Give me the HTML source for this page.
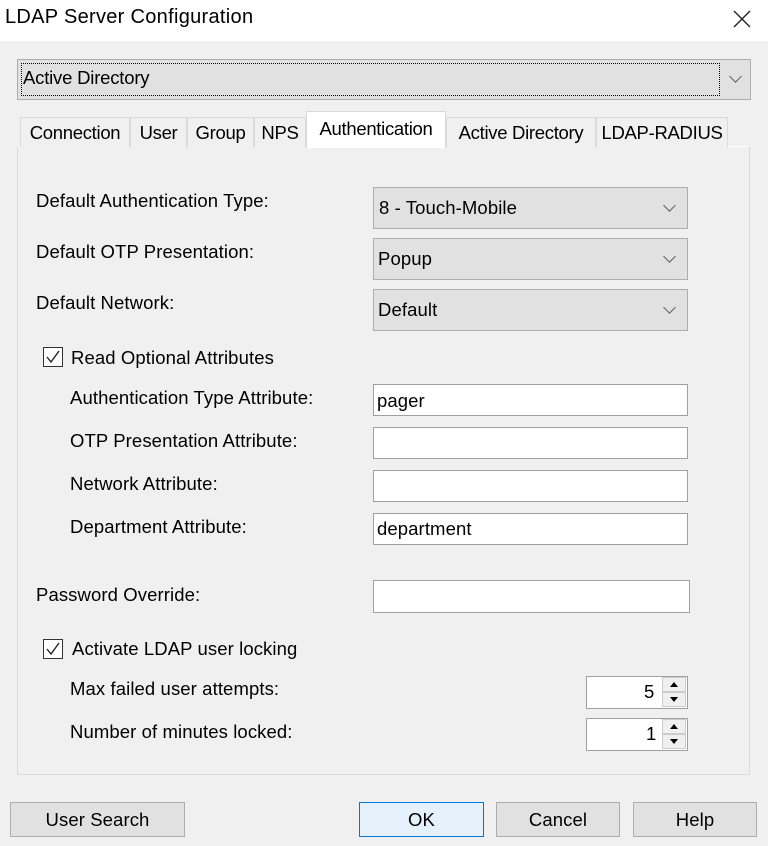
<!DOCTYPE html>
<html><head><style>
*{box-sizing:border-box;margin:0;padding:0}
body{width:768px;height:846px;background:#f0f0f0;font-family:"Liberation Sans",sans-serif;font-size:18.5px;color:#000;position:relative;overflow:hidden;letter-spacing:0.1px}
.a{position:absolute;white-space:nowrap}
.title{left:0;top:0;width:768px;height:41px;background:#fff}
.dd{background:#e1e1e1;border:1px solid #adadad}
.tb{background:#fff;border:1px solid #a0a0a0}
.chev{position:absolute;width:9px;height:9px;border-right:1.3px solid #606060;border-bottom:1.3px solid #606060;transform:rotate(45deg)}
.tab{position:absolute;top:117px;height:30px;border:1px solid #dadada;border-bottom:none;background:#f0f0f0;text-align:center;line-height:29px;letter-spacing:-0.3px}
.cb{position:absolute;width:20px;height:20px;border:1px solid #333;background:#fff}
.btn{position:absolute;top:802px;height:35px;background:#e1e1e1;border:1px solid #adadad;text-align:center;line-height:33px}
.spin{position:absolute;width:102px;height:33px;background:#fff;border:1px solid #a0a0a0}
</style></head><body>
<div class="a title"></div>
<div class="a" style="left:5px;top:6px;font-size:20px;letter-spacing:0.3px">LDAP Server Configuration</div>
<svg class="a" style="left:733px;top:10px" width="18" height="18"><path d="M1 1L17 17M17 1L1 17" stroke="#222" stroke-width="1.4"/></svg>

<div class="a dd" style="left:17px;top:59px;width:734px;height:41px"></div>
<div class="a" style="left:21px;top:63px;width:699px;height:33px;border:1px dotted #000"></div>
<div class="a" style="left:23px;top:67px;letter-spacing:-0.2px">Active Directory</div>
<div class="chev" style="left:731px;top:72px"></div>

<div class="a" style="left:17px;top:146px;width:733px;height:629px;border:1px solid #dadada;border-top-color:#fff;background:#f0f0f0"></div>
<div class="tab" style="left:20px;width:110px">Connection</div>
<div class="tab" style="left:130px;width:57px">User</div>
<div class="tab" style="left:187px;width:67px">Group</div>
<div class="tab" style="left:254px;width:52px">NPS</div>
<div class="tab" style="left:306px;top:111px;height:37px;width:140px;background:#fff;line-height:34px;border-color:#dadada">Authentication</div>
<div class="tab" style="left:446px;width:150px">Active Directory</div>
<div class="tab" style="left:596px;width:132px">LDAP-RADIUS</div>

<div class="a" style="left:36px;top:190px">Default Authentication Type:</div>
<div class="a" style="left:36px;top:241px">Default OTP Presentation:</div>
<div class="a" style="left:36px;top:292px">Default Network:</div>
<div class="a dd" style="left:373px;top:187px;width:315px;height:42px"></div>
<div class="a" style="left:379px;top:197px">8 - Touch-Mobile</div>
<div class="chev" style="left:665px;top:201px"></div>
<div class="a dd" style="left:373px;top:238px;width:315px;height:42px"></div>
<div class="a" style="left:378px;top:248px">Popup</div>
<div class="chev" style="left:665px;top:252px"></div>
<div class="a dd" style="left:373px;top:289px;width:315px;height:42px"></div>
<div class="a" style="left:378px;top:299px">Default</div>
<div class="chev" style="left:665px;top:303px"></div>

<div class="cb" style="left:43px;top:347px"></div>
<svg class="a" style="left:45px;top:349px" width="16" height="16"><path d="M2 8L6 13L14 2" stroke="#222" stroke-width="1.4" fill="none"/></svg>
<div class="a" style="left:71px;top:347px">Read Optional Attributes</div>

<div class="a" style="left:70px;top:387px">Authentication Type Attribute:</div>
<div class="a" style="left:70px;top:430px">OTP Presentation Attribute:</div>
<div class="a" style="left:70px;top:473px">Network Attribute:</div>
<div class="a" style="left:70px;top:516px">Department Attribute:</div>
<div class="a tb" style="left:373px;top:384px;width:315px;height:32px"></div>
<div class="a" style="left:377px;top:390px">pager</div>
<div class="a tb" style="left:373px;top:427px;width:315px;height:32px"></div>
<div class="a tb" style="left:373px;top:470px;width:315px;height:32px"></div>
<div class="a tb" style="left:373px;top:513px;width:315px;height:32px"></div>
<div class="a" style="left:377px;top:518px">department</div>

<div class="a" style="left:36px;top:584px">Password Override:</div>
<div class="a tb" style="left:373px;top:580px;width:317px;height:33px"></div>

<div class="cb" style="left:43px;top:639px"></div>
<svg class="a" style="left:45px;top:641px" width="16" height="16"><path d="M2 8L6 13L14 2" stroke="#222" stroke-width="1.4" fill="none"/></svg>
<div class="a" style="left:72px;top:638px">Activate LDAP user locking</div>

<div class="a" style="left:70px;top:678px">Max failed user attempts:</div>
<div class="a" style="left:70px;top:721px">Number of minutes locked:</div>
<div class="spin" style="left:586px;top:676px"></div>
<div class="a" style="left:644px;top:681px">5</div>
<div class="spin" style="left:586px;top:718px"></div>
<div class="a" style="left:646px;top:723px">1</div>
<svg class="a" style="left:662px;top:677px" width="25" height="31"><rect x="0.5" y="0.5" width="23" height="14" fill="#f0f0f0" stroke="#ccc"/><rect x="0.5" y="15.5" width="23" height="14" fill="#f0f0f0" stroke="#ccc"/><path d="M8 10L12 5L16 10Z M8 20L12 25L16 20Z" fill="#000"/></svg>
<svg class="a" style="left:662px;top:719px" width="25" height="31"><rect x="0.5" y="0.5" width="23" height="14" fill="#f0f0f0" stroke="#ccc"/><rect x="0.5" y="15.5" width="23" height="14" fill="#f0f0f0" stroke="#ccc"/><path d="M8 10L12 5L16 10Z M8 20L12 25L16 20Z" fill="#000"/></svg>

<div class="btn" style="left:10px;width:175px">User Search</div>
<div class="btn" style="left:359px;width:125px;background:#e5f1fb;border-color:#0078d7">OK</div>
<div class="btn" style="left:496px;width:124px">Cancel</div>
<div class="btn" style="left:633px;width:124px">Help</div>
</body></html>
